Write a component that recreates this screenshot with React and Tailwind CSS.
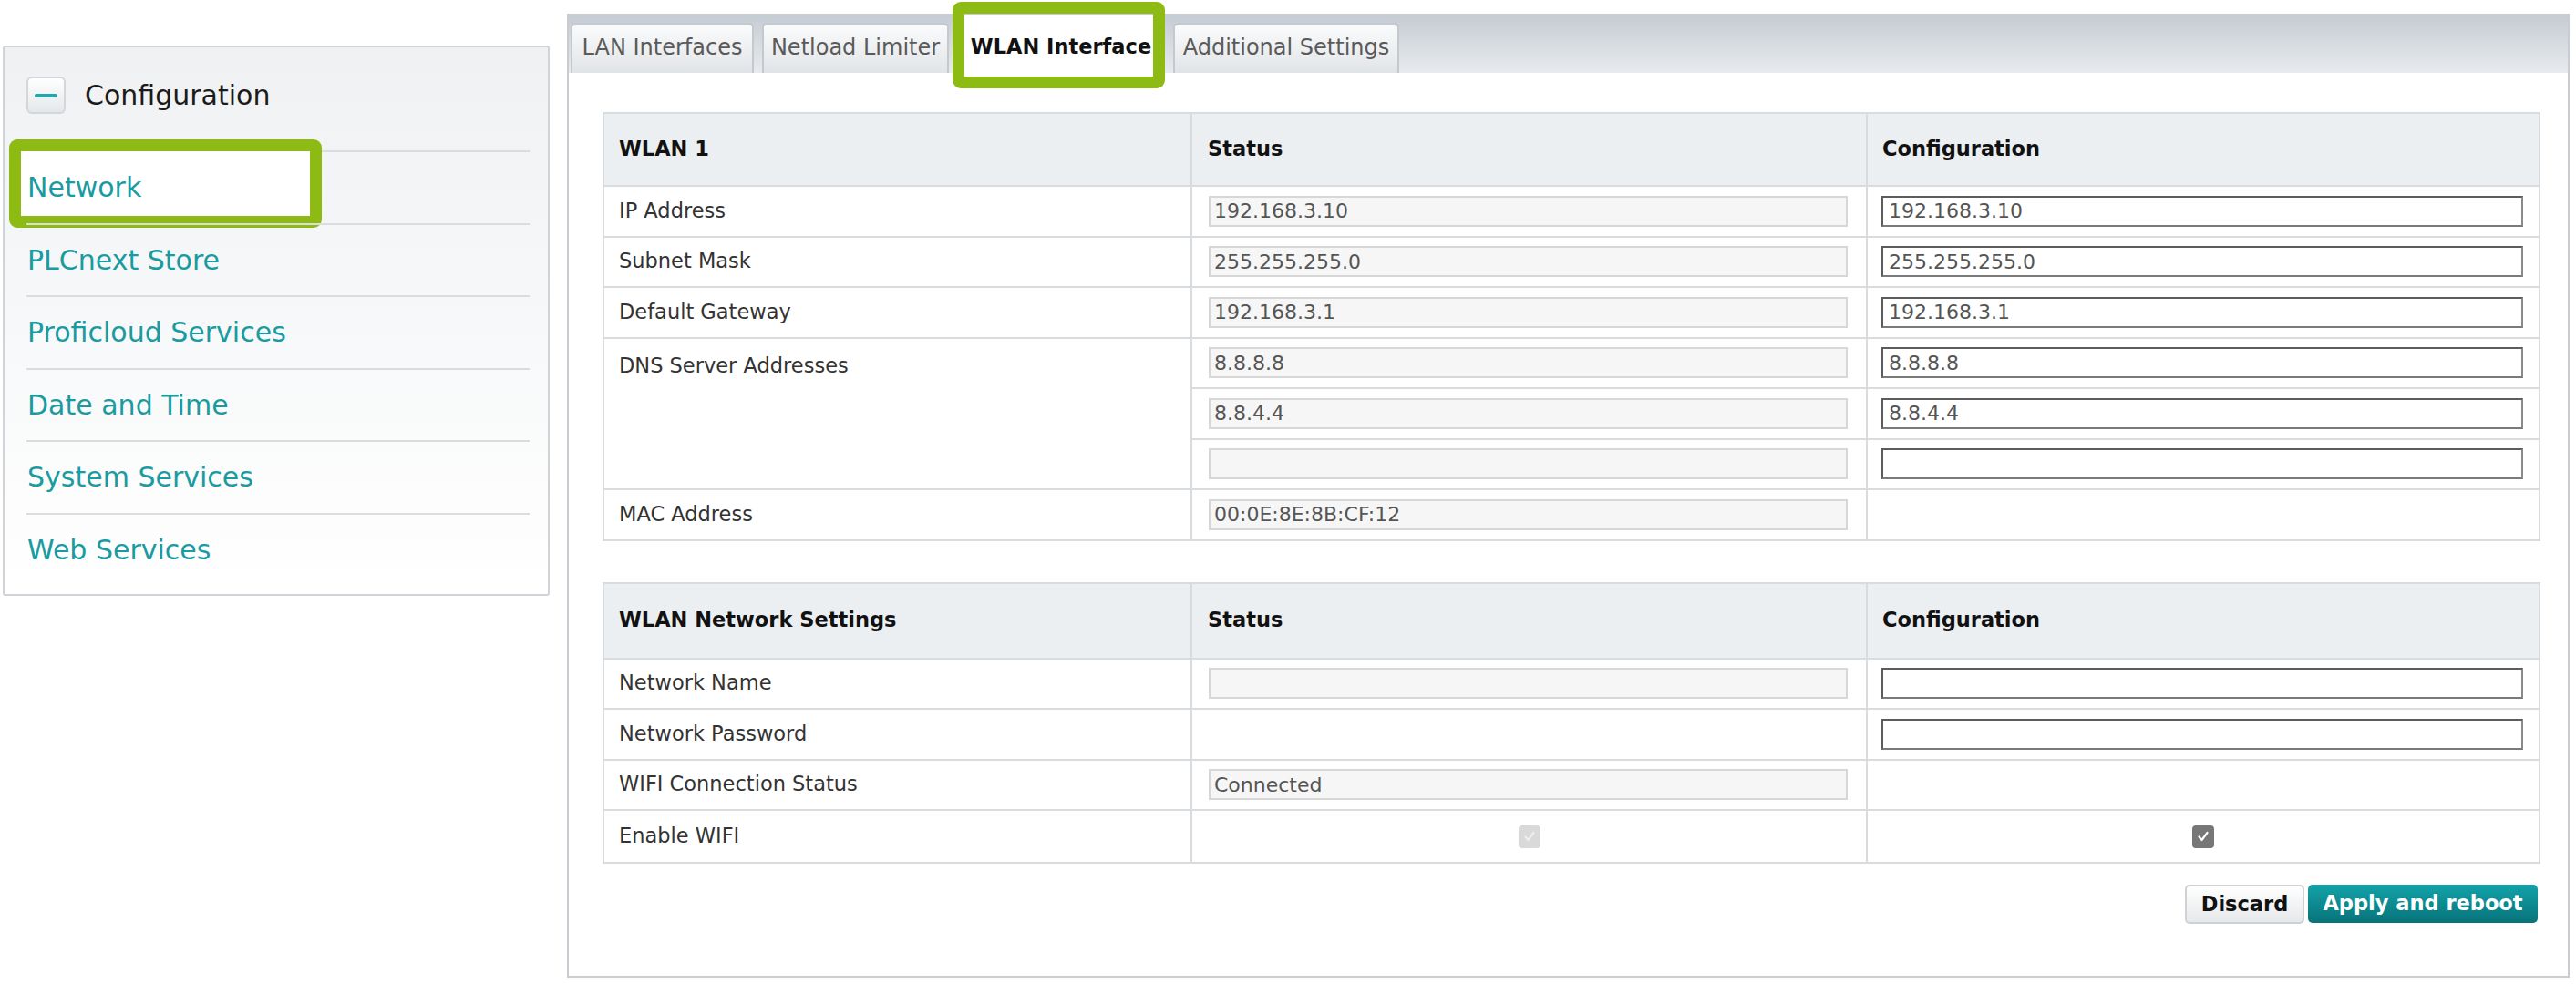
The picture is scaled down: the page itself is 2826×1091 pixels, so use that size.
import React from 'react'

const sideItems = ['Network', 'PLCnext Store', 'Proficloud Services', 'Date and Time', 'System Services', 'Web Services']

const tabs = [
  { label: 'LAN Interfaces', w: 'w-[201px]' },
  { label: 'Netload Limiter', w: 'w-[205px]' },
  { label: 'WLAN Interface', w: 'w-[228px]', active: true },
  { label: 'Additional Settings', w: 'w-[248px]' },
]

function StatusInput({ value = '' }) {
  return (
    <div className="flex h-[34px] w-full items-center border-2 border-[#d7d7d7] bg-[#f6f6f6] px-[4px] text-[22px] text-[#555]">
      {value}
    </div>
  )
}

function ConfigInput({ value = '' }) {
  return (
    <div className="flex h-[34px] w-full items-center border-2 border-t-[#5c5c5c] border-l-[#5c5c5c] border-r-[#8a8a8a] border-b-[#7a7a7a] bg-white px-[6px] text-[22px] text-[#555]">
      {value}
    </div>
  )
}

function Check({ disabled }) {
  return (
    <span
      className={
        'mx-auto flex h-[25px] w-[24px] items-center justify-center rounded-[4px] ' +
        (disabled ? 'bg-[#d9d9d9]' : 'bg-[#777]')
      }
    >
      <svg width="16" height="16" viewBox="0 0 16 16" fill="none">
        <path d="M3.5 8.5l3 3.5 6-8" stroke={disabled ? '#eeeeee' : '#ffffff'} strokeWidth="2.2" strokeLinecap="round" strokeLinejoin="round" />
      </svg>
    </span>
  )
}

const cell = 'border-2 border-[#d8dcdf] px-[16px] h-[55.5px] align-middle'
const stCell = 'border-2 border-[#d8dcdf] pl-[18px] pr-[20px] h-[55.5px] align-middle'
const cfCell = 'border-2 border-[#d8dcdf] pl-[15px] pr-[17px] h-[55.5px] align-middle'

function Head({ title, h = 'h-[80px]' }) {
  return (
    <thead>
      <tr className="bg-[#eceff2]">
        <th className={h + ' border-2 border-[#d8dcdf] px-[16px] text-left font-bold text-[#111]'}>{title}</th>
        <th className={h + ' border-2 border-[#d8dcdf] px-[17px] text-left font-bold text-[#111]'}>Status</th>
        <th className={h + ' border-2 border-[#d8dcdf] px-[16px] text-left font-bold text-[#111]'}>Configuration</th>
      </tr>
    </thead>
  )
}

function Cols() {
  return (
    <colgroup>
      <col className="w-[645px]" />
      <col className="w-[741px]" />
      <col />
    </colgroup>
  )
}

export default function App() {
  return (
    <div className="flex min-h-[1091px] w-[2826px] bg-white font-['DejaVu_Sans',sans-serif] text-[#333]">
      <aside className="ml-[3px] mt-[50px] h-[604px] w-[600px] shrink-0 rounded-[3px] border-2 border-[#d0d4d8] bg-gradient-to-b from-[#eff1f3] to-white pl-[24px] pr-[20px]">
        <div className="flex h-[113px] items-start pt-[32px]">
          <span className="flex h-[41px] w-[43px] items-center justify-center rounded-[6px] border-2 border-[#d3d6da] bg-gradient-to-b from-white to-[#e4e7ea]">
            <span className="h-[4px] w-[25px] rounded-full bg-[#22a7ad]" />
          </span>
          <span className="ml-[21px] text-[30px] leading-[41px] text-[#1b1b1b]">Configuration</span>
        </div>
        {sideItems.map((item, i) => (
          <div key={item} className="relative flex h-[79.5px] items-center border-t-2 border-[#dadde0] text-[30px] text-[#1a9ba1]">
            {i === 0 && (
              <span className="absolute left-[-19px] top-[-14px] h-[97px] w-[343px] rounded-[9px] border-[13px] border-[#8dbb14] bg-white" />
            )}
            <span className="relative pl-[1px]">{item}</span>
          </div>
        ))}
      </aside>

      <main className="relative ml-[19px] mt-[15px] h-[1058px] w-[2197px] shrink-0 border-2 border-[#c9cdd1]">
        <div className="flex h-[63px] items-end gap-[9px] bg-gradient-to-b from-[#c5ccd3] to-[#e8ebee] pl-[2px]">
          {tabs.map((t) =>
            t.active ? (
              <div key={t.label} className={t.w + ' flex h-[63px] items-center justify-center bg-white pt-[6px] text-[22.5px] font-bold text-[#111]'}>
                {t.label}
              </div>
            ) : (
              <div
                key={t.label}
                className={t.w + ' flex h-[55px] items-center justify-center rounded-t-[5px] border-2 border-b-0 border-[#c4c9ce] bg-gradient-to-b from-[#fafbfc] to-[#e1e4e7] pb-[4px] text-[24px] text-[#5a5a5a]'}
              >
                {t.label}
              </div>
            )
          )}
        </div>
        <span className="absolute left-[421px] top-[-15px] h-[95px] w-[233px] rounded-[9px] border-[13px] border-[#8dbb14]" />

        <div className="pl-[37px] pr-[30px] pt-[43px] text-[22.5px]">
          <table className="w-full table-fixed border-collapse">
            <Cols />
            <Head title="WLAN 1" />
            <tbody>
              <tr>
                <td className={cell}>IP Address</td>
                <td className={stCell}><StatusInput value="192.168.3.10" /></td>
                <td className={cfCell}><ConfigInput value="192.168.3.10" /></td>
              </tr>
              <tr>
                <td className={cell}>Subnet Mask</td>
                <td className={stCell}><StatusInput value="255.255.255.0" /></td>
                <td className={cfCell}><ConfigInput value="255.255.255.0" /></td>
              </tr>
              <tr>
                <td className={cell}>Default Gateway</td>
                <td className={stCell}><StatusInput value="192.168.3.1" /></td>
                <td className={cfCell}><ConfigInput value="192.168.3.1" /></td>
              </tr>
              <tr>
                <td rowSpan={3} className="border-2 border-[#d8dcdf] px-[16px] pt-[13px] align-top">DNS Server Addresses</td>
                <td className={stCell}><StatusInput value="8.8.8.8" /></td>
                <td className={cfCell}><ConfigInput value="8.8.8.8" /></td>
              </tr>
              <tr>
                <td className={stCell}><StatusInput value="8.8.4.4" /></td>
                <td className={cfCell}><ConfigInput value="8.8.4.4" /></td>
              </tr>
              <tr>
                <td className={stCell}><StatusInput /></td>
                <td className={cfCell}><ConfigInput /></td>
              </tr>
              <tr>
                <td className={cell}>MAC Address</td>
                <td className={stCell}><StatusInput value="00:0E:8E:8B:CF:12" /></td>
                <td className={cfCell}></td>
              </tr>
            </tbody>
          </table>

          <table className="mt-[45px] w-full table-fixed border-collapse">
            <Cols />
            <Head title="WLAN Network Settings" h="h-[83px]" />
            <tbody>
              <tr>
                <td className={cell}>Network Name</td>
                <td className={stCell}><StatusInput /></td>
                <td className={cfCell}><ConfigInput /></td>
              </tr>
              <tr>
                <td className={cell}>Network Password</td>
                <td className={stCell}></td>
                <td className={cfCell}><ConfigInput /></td>
              </tr>
              <tr>
                <td className={cell}>WIFI Connection Status</td>
                <td className={stCell}><StatusInput value="Connected" /></td>
                <td className={cfCell}></td>
              </tr>
              <tr>
                <td className={cell + ' h-[58px]'}>Enable WIFI</td>
                <td className="h-[58px] border-2 border-[#d8dcdf] text-center align-middle"><Check disabled /></td>
                <td className="h-[58px] border-2 border-[#d8dcdf] text-center align-middle"><Check /></td>
              </tr>
            </tbody>
          </table>

          <div className="mt-[23px] flex justify-end gap-[4px] pr-[3px]">
            <button className="h-[43px] w-[131px] rounded-[5px] border-2 border-[#cfd2d5] bg-gradient-to-b from-white to-[#e6e8ea] text-[22.5px] font-bold text-[#111]">
              Discard
            </button>
            <button className="h-[42px] w-[252px] rounded-[5px] bg-gradient-to-b from-[#12a3a8] to-[#08737a] text-[22.5px] font-bold text-white">
              Apply and reboot
            </button>
          </div>
        </div>
      </main>
    </div>
  )
}
